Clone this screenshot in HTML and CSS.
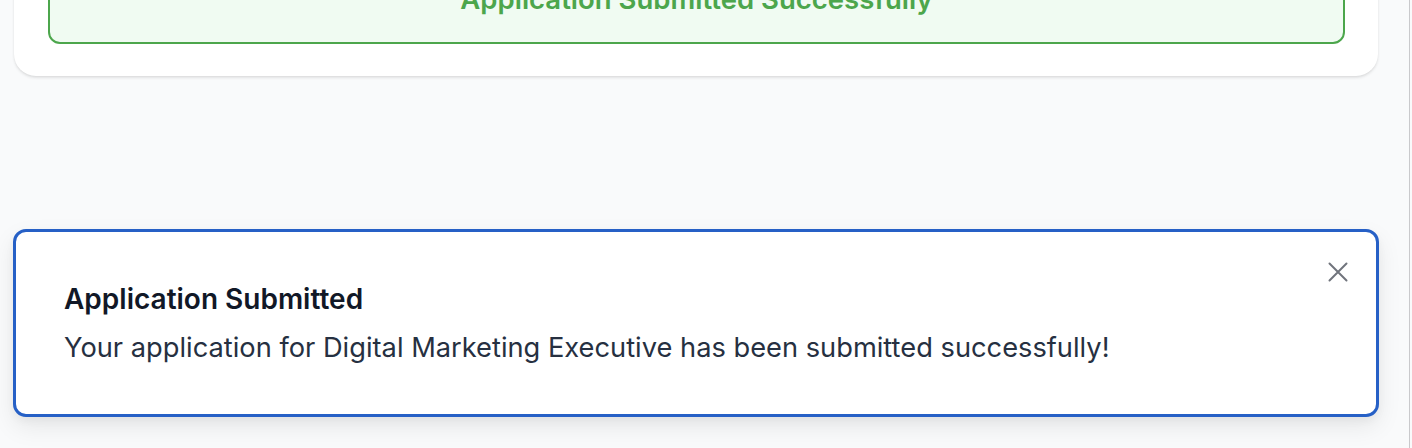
FILE: index.html
```html
<!DOCTYPE html>
<html lang="en">
<head>
<meta charset="utf-8">
<title>Application Submitted</title>
<link rel="stylesheet" href="styles.css">
</head>
<body>
<div class="frame">
  <main class="page">
    <section class="card">
      <div class="success-box">
        <h2 class="success-text">Application Submitted Successfully</h2>
      </div>
    </section>
  </main>
  <div class="toast" role="status">
    <div class="toast-body">
      <div class="toast-title">Application Submitted</div>
      <div class="toast-desc">Your application for Digital Marketing Executive has been submitted successfully!</div>
    </div>
    <button class="toast-close" aria-label="Close">
      <svg width="20" height="20" viewBox="0 0 20 20" fill="none" stroke="currentColor" stroke-width="2" stroke-linecap="round"><path d="M1.5 1.5 18.5 18.5M18.5 1.5 1.5 18.5"/></svg>
    </button>
  </div>
</div>
</body>
</html>
```
FILE: styles.css
```css
* { box-sizing: border-box; }
html, body { margin: 0; padding: 0; }
body {
  background: #f9fafb;
  font-family: Inter, "Noto Sans", sans-serif;
  overflow: hidden;
}
.frame {
  display: flow-root;
  width: 1410px;
  height: 448px;
  border-right: 1px solid #c9c9cc;
  position: relative;
  overflow: hidden;
}
.page {
  display: flow-root;
  padding: 0 31px 0 14px;
}
.card {
  margin-top: -75px;
  background: #fff;
  border-radius: 22px;
  padding: 34px 33px 32.5px 34px;
  box-shadow: 0 2px 3px rgba(0,0,0,0.09), 0 1px 2px rgba(0,0,0,0.04);
}
.success-box {
  background: #f0fbf2;
  border: 2px solid #4ca64c;
  border-radius: 12px;
  padding: 24px 16px 28.5px;
  text-align: center;
}
.success-text {
  margin: 0;
  color: #4ca64c;
  font-size: 27.5px;
  font-weight: 600;
  line-height: 28px;
}
.toast {
  position: absolute;
  left: 13px;
  right: 30px;
  bottom: 31px;
  height: 188px;
  background: #fff;
  border: 3px solid #2660c6;
  border-radius: 13px;
  box-shadow: 0 10px 24px rgba(0,0,0,0.08), 0 4px 8px rgba(0,0,0,0.04);
  display: flex;
  align-items: center;
  justify-content: space-between;
  padding: 0 28px 0 48px;
}
.toast-body {
  display: flex;
  flex-direction: column;
  gap: 13px;
}
.toast-title {
  font-size: 28px;
  font-weight: 600;
  color: #111827;
  line-height: 36px;
}
.toast-desc {
  font-size: 27.25px;
  color: #263041;
  line-height: 36px;
}
.toast-close {
  align-self: flex-start;
  margin-top: 30px;
  background: none;
  border: 0;
  padding: 0;
  color: #70747c;
  display: flex;
  cursor: pointer;
}
```
